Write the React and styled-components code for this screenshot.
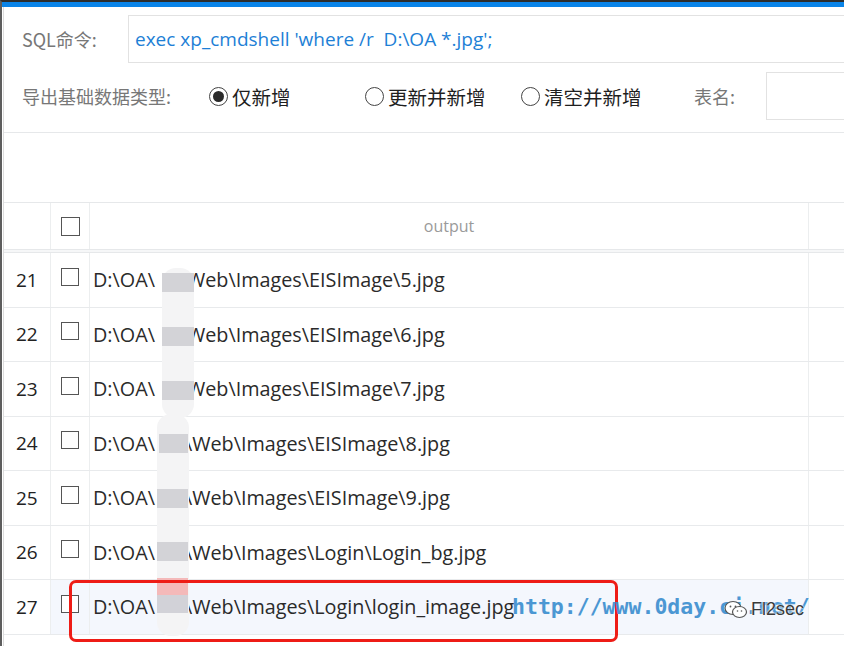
import React from "react";
import styled, { createGlobalStyle } from "styled-components";

const Global = createGlobalStyle`
  html, body { margin: 0; padding: 0; background: #fff; }
  body { width: 844px; height: 646px; overflow: hidden;
    font-family: "Noto Sans", "Noto Sans CJK SC", sans-serif; }
  * { box-sizing: border-box; }
`;

const Window = styled.div`
  position: relative;
  width: 844px;
  height: 646px;
  border-top: 2px solid #2d2d2d;
  border-left: 2px solid #5d5d5d;
  overflow: hidden;
`;

const TitleBar = styled.div`
  height: 5px;
  background: #0a84e8;
`;

const Panel = styled.div`
  margin-left: 1px;
  border-left: 1px solid #dcdcdc;
  height: 100%;
  display: flex;
  flex-direction: column;
`;

const FormRow = styled.div`
  display: flex;
  align-items: center;
  height: ${p => p.$h}px;
  margin-top: ${p => p.$mt || 0}px;
  padding-left: 18px;
`;

const Label = styled.span`
  font-family: "Noto Sans CJK SC", sans-serif;
  font-size: 18px;
  color: #777;
  width: ${p => p.$w}px;
  flex: none;
  white-space: nowrap;
`;

const SqlInput = styled.div`
  flex: 1;
  height: 48px;
  border: 1px solid #e2e2e2;
  border-right: none;
  display: flex;
  align-items: center;
  padding-left: 6px;
  font-family: "Open Sans", "Noto Sans CJK SC", sans-serif;
  font-size: 19px;
  color: #1e7fd6;
  white-space: pre;
`;

const RadioItem = styled.label`
  display: flex;
  align-items: center;
  gap: 4px;
  width: ${p => p.$w}px;
  flex: none;
  font-family: "Noto Sans CJK SC", sans-serif;
  font-size: 19.5px;
  color: #1f1f1f;
  white-space: nowrap;
`;

const RadioCircle = styled.span`
  width: 19px;
  height: 19px;
  border-radius: 50%;
  border: 1.5px solid #444;
  display: flex;
  align-items: center;
  justify-content: center;
  flex: none;
  &::after {
    content: "";
    width: 11px;
    height: 11px;
    border-radius: 50%;
    background: ${p => (p.$on ? "#2a2a2a" : "transparent")};
  }
`;

const NameInput = styled.div`
  flex: 1;
  height: 48px;
  border: 1px solid #e2e2e2;
  border-right: none;
`;

const Divider = styled.div`
  margin-top: 12px;
  height: 1px;
  background: #e6e8ea;
`;

const Table = styled.div`
  margin-top: 69px;
  display: flex;
  flex-direction: column;
`;

const HeadRow = styled.div`
  display: grid;
  grid-template-columns: 47px 39px 719px 1fr;
  height: 48px;
  border-top: 1px solid #e6e8ea;
  border-bottom: 1px solid #e6e8ea;
`;

const Gap = styled.div`
  height: 3px;
  background: #f6f7f8;
  border-bottom: 1px solid #e6e8ea;
`;

const Cell = styled.div`
  display: flex;
  align-items: center;
  justify-content: ${p => (p.$center ? "center" : "flex-start")};
  border-right: ${p => (p.$last ? "none" : "1px solid #eceeef")};
  background: ${p => (p.$hl ? "#f4f7fd" : "transparent")};
  padding-left: ${p => p.$pl || 0}px;
  overflow: visible;
`;

const HeadText = styled.span`
  font-family: "Open Sans", sans-serif;
  font-size: 16px;
  color: #9a9a9a;
`;

const Box = styled.span`
  width: ${p => p.$s}px;
  height: ${p => p.$s}px;
  border: 1.5px solid #555;
  background: #fff;
  display: block;
  margin-top: ${p => p.$mt || 0}px;
`;

const Row = styled.div`
  display: grid;
  grid-template-columns: 47px 39px 719px 1fr;
  height: 54.5px;
  border-bottom: 1px solid #e8eaec;
`;

const Num = styled.span`
  font-family: "Open Sans", sans-serif;
  font-size: 19px;
  color: #222;
  padding-left: 12px;
`;

const Path = styled.span`
  display: flex;
  align-items: baseline;
  font-family: "Open Sans", sans-serif;
  font-size: 19.8px;
  color: #2a2a2a;
  white-space: pre;
`;

const Hidden = styled.span`
  display: inline-block;
  width: ${p => p.$w}px;
`;

const RedBox = styled.div`
  position: absolute;
  left: 67px;
  top: 578px;
  width: 549px;
  height: 62px;
  border: 3.5px solid #ee1c16;
  border-radius: 7px;
`;

const Blur = styled.div`
  position: absolute;
  left: ${p => p.$x}px;
  top: ${p => p.$y}px;
  width: ${p => p.$w}px;
  height: ${p => p.$h}px;
  background: ${p => p.$c};
  border-radius: ${p => p.$r || 0}px;
`;

const Watermark = styled.div`
  position: absolute;
  left: 510px;
  top: 592px;
  font-family: "DejaVu Sans Mono", monospace;
  font-size: 21.5px;
  font-weight: bold;
  color: #3d8fd0;
  opacity: 0.92;
  white-space: pre;
`;

const Wechat = styled.div`
  position: absolute;
  left: 722px;
  top: 597px;
  display: flex;
  align-items: center;
  gap: 3px;
  font-family: "Liberation Sans", sans-serif;
  font-size: 18px;
  color: #3a3a3a;
  text-shadow: 0 0 2px #fff, 0 0 2px #fff;
`;

const rows = [
  [21, "D:\\OA\\", 32, "Web\\Images\\EISImage\\5.jpg"],
  [22, "D:\\OA\\", 32, "Web\\Images\\EISImage\\6.jpg"],
  [23, "D:\\OA\\", 32, "Web\\Images\\EISImage\\7.jpg"],
  [24, "D:\\OA\\", 30, "\\Web\\Images\\EISImage\\8.jpg"],
  [25, "D:\\OA\\", 30, "\\Web\\Images\\EISImage\\9.jpg"],
  [26, "D:\\OA\\", 30, "\\Web\\Images\\Login\\Login_bg.jpg"],
  [27, "D:\\OA\\", 30, "\\Web\\Images\\Login\\login_image.jpg"],
];

const WechatIcon = () => (
  <svg width="24" height="20" viewBox="0 0 24 20" fill="none" stroke="#555" strokeWidth="1.2">
    <ellipse cx="9" cy="8" rx="8" ry="6.5" fill="#fff" />
    <ellipse cx="15.5" cy="12" rx="7" ry="5.5" fill="#fff" />
    <circle cx="6.5" cy="6.5" r="0.9" fill="#555" stroke="none" />
    <circle cx="11.5" cy="6.5" r="0.9" fill="#555" stroke="none" />
    <circle cx="13.5" cy="11" r="0.8" fill="#555" stroke="none" />
    <circle cx="17.5" cy="11" r="0.8" fill="#555" stroke="none" />
  </svg>
);

export default function App() {
  return (
    <>
      <Global />
      <Window>
        <TitleBar />
        <Panel>
          <FormRow $h={48} $mt={8}>
            <Label $w={106}>SQL命令:</Label>
            <SqlInput>{"exec xp_cmdshell 'where /r  D:\\OA *.jpg';"}</SqlInput>
          </FormRow>
          <FormRow $h={48} $mt={9}>
            <Label $w={187}>导出基础数据类型:</Label>
            <RadioItem $w={156}><RadioCircle $on />仅新增</RadioItem>
            <RadioItem $w={156}><RadioCircle />更新并新增</RadioItem>
            <RadioItem $w={173}><RadioCircle />清空并新增</RadioItem>
            <Label $w={72}>表名:</Label>
            <NameInput />
          </FormRow>
          <Divider />
          <Table>
            <HeadRow>
              <Cell />
              <Cell $center><Box $s={19} /></Cell>
              <Cell $center><HeadText>output</HeadText></Cell>
              <Cell $last />
            </HeadRow>
            <Gap />
            {rows.map(([n, a, g, b]) => {
              const hl = n === 27;
              return (
                <Row key={n}>
                  <Cell><Num>{n}</Num></Cell>
                  <Cell $center $hl={hl}><Box $s={18} $mt={-6} /></Cell>
                  <Cell $pl={3} $hl={hl}>
                    <Path>{a}<Hidden $w={g} />{b}</Path>
                  </Cell>
                  <Cell $last />
                </Row>
              );
            })}
          </Table>
        </Panel>
        <Blur $x={160} $y={266} $w={32} $h={150} $c="#f4f4f5" $r={14} />
        <Blur $x={155} $y={412} $w={32} $h={222} $c="#f4f4f5" $r={14} />
        <Blur $x={160} $y={271} $w={32} $h={19} $c="#d3d3d7" />
        <Blur $x={160} $y={325} $w={32} $h={19} $c="#d3d3d7" />
        <Blur $x={160} $y={379} $w={32} $h={19} $c="#d3d3d7" />
        <Blur $x={157} $y={432} $w={29} $h={19} $c="#d3d3d7" />
        <Blur $x={155} $y={487} $w={31} $h={19} $c="#d3d3d7" />
        <Blur $x={155} $y={540} $w={31} $h={19} $c="#d3d3d7" />
        <Blur $x={155} $y={576} $w={31} $h={17} $c="#f4b9b9" />
        <Blur $x={155} $y={593} $w={31} $h={18} $c="#d2d2d8" />
        <RedBox />
        <Watermark>{"http://www.0day.ci.net/"}</Watermark>
        <Wechat><WechatIcon />Fl2sec</Wechat>
      </Window>
    </>
  );
}
